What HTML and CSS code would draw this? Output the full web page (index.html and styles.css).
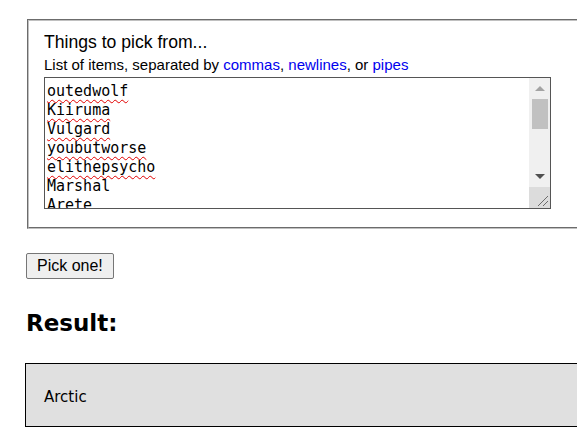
FILE: index.html
```html
<!DOCTYPE html>
<html>
<head>
<meta charset="utf-8">
<link rel="stylesheet" href="styles.css">
</head>
<body>
<div class="page">
  <fieldset class="picker">
    <div class="title">Things to pick from...</div>
    <div class="hint">List of items, separated by <a href="#" class="kw">commas</a>, <a href="#" class="kw">newlines</a>, or <a href="#" class="kw">pipes</a></div>
    <div class="textbox">
      <div class="lines" role="textbox" aria-multiline="true">
        <div><span class="misspelt">outedwolf</span></div>
        <div><span class="misspelt">Kiiruma</span></div>
        <div><span class="misspelt">Vulgard</span></div>
        <div><span class="misspelt">youbutworse</span></div>
        <div><span class="misspelt">elithepsycho</span></div>
        <div>Marshal</div>
        <div>Arete</div>
      </div>
      <div class="scrollbar">
        <div class="sb-btn"><span class="tri-up"></span></div>
        <div class="thumb"></div>
        <div class="track"></div>
        <div class="sb-btn"><span class="tri-down"></span></div>
        <div class="corner">
          <svg width="21" height="21" viewBox="0 0 21 21"><path d="M9 19 L19 9 M14 19 L19 14" stroke="#6b6b6b" stroke-width="1" fill="none"/></svg>
        </div>
      </div>
    </div>
  </fieldset>
  <button class="pick">Pick one!</button>
  <h2 class="result-title">Result:</h2>
  <div class="result">Arctic</div>
</div>
</body>
</html>
```
FILE: styles.css
```css
html, body {
  margin: 0;
  padding: 0;
  background: #fff;
  overflow: hidden;
}
.page {
  width: 640px;
  padding: 19px 0 0 25px;
  font-family: "Liberation Sans", Arial, sans-serif;
  color: #000;
}
.picker {
  margin: 0 0 0 2px;
  padding: 11px 15px 18px 15px;
  border: 2px groove #c0c0c0;
  min-width: 0;
}
.title {
  font-size: 17.6px;
  line-height: 20px;
}
.hint {
  font-size: 15px;
  line-height: 18px;
  margin-top: 4px;
  margin-bottom: 3px;
}
.kw {
  color: #0000ee;
  text-decoration: none;
}
.textbox {
  display: flex;
  width: 505px;
  height: 130px;
  border: 1px solid #555;
  background: #fff;
}
.lines {
  flex: 1;
  overflow: hidden;
  padding: 4px 2px 0 2px;
  font-family: "DejaVu Sans Mono", "Liberation Mono", monospace;
  font-size: 15px;
  line-height: 19px;
  white-space: nowrap;
}
.misspelt {
  text-decoration: underline wavy #e00000;
  text-decoration-thickness: 1px;
  text-underline-offset: 3px;
  text-decoration-skip-ink: none;
}
.scrollbar {
  width: 21px;
  display: flex;
  flex-direction: column;
  background: #f0f0f0;
}
.sb-btn {
  height: 21px;
  display: flex;
  align-items: center;
  justify-content: center;
}
.tri-up {
  width: 0;
  height: 0;
  border-left: 5px solid transparent;
  border-right: 5px solid transparent;
  border-bottom: 5px solid #a3a3a3;
}
.tri-down {
  width: 0;
  height: 0;
  border-left: 5px solid transparent;
  border-right: 5px solid transparent;
  border-top: 5px solid #505050;
}
.thumb {
  height: 30px;
  margin: 0 2px 0 3px;
  background: #c1c1c1;
}
.track {
  flex: 1;
}
.corner {
  height: 21px;
  background: #dcdcdc;
}
.corner svg {
  display: block;
}
.pick {
  display: block;
  margin: 24px 0 0 1px;
  padding: 3px 10px;
  font-family: "Liberation Sans", Arial, sans-serif;
  font-size: 16px;
  line-height: 18px;
  background: #efefef;
  border: 1px solid #767676;
  border-radius: 2px;
  color: #000;
}
.result-title {
  margin: 30px 0 0 1px;
  font-family: "DejaVu Sans", Verdana, sans-serif;
  font-size: 23px;
  line-height: 28px;
  font-weight: bold;
}
.result {
  margin-top: 26px;
  display: flex;
  align-items: center;
  padding-left: 18px;
  padding-top: 3px;
  box-sizing: border-box;
  height: 64px;
  background: #e0e0e0;
  border: 1px solid #000;
  font-family: "DejaVu Sans", Verdana, sans-serif;
  font-size: 15px;
}
```
